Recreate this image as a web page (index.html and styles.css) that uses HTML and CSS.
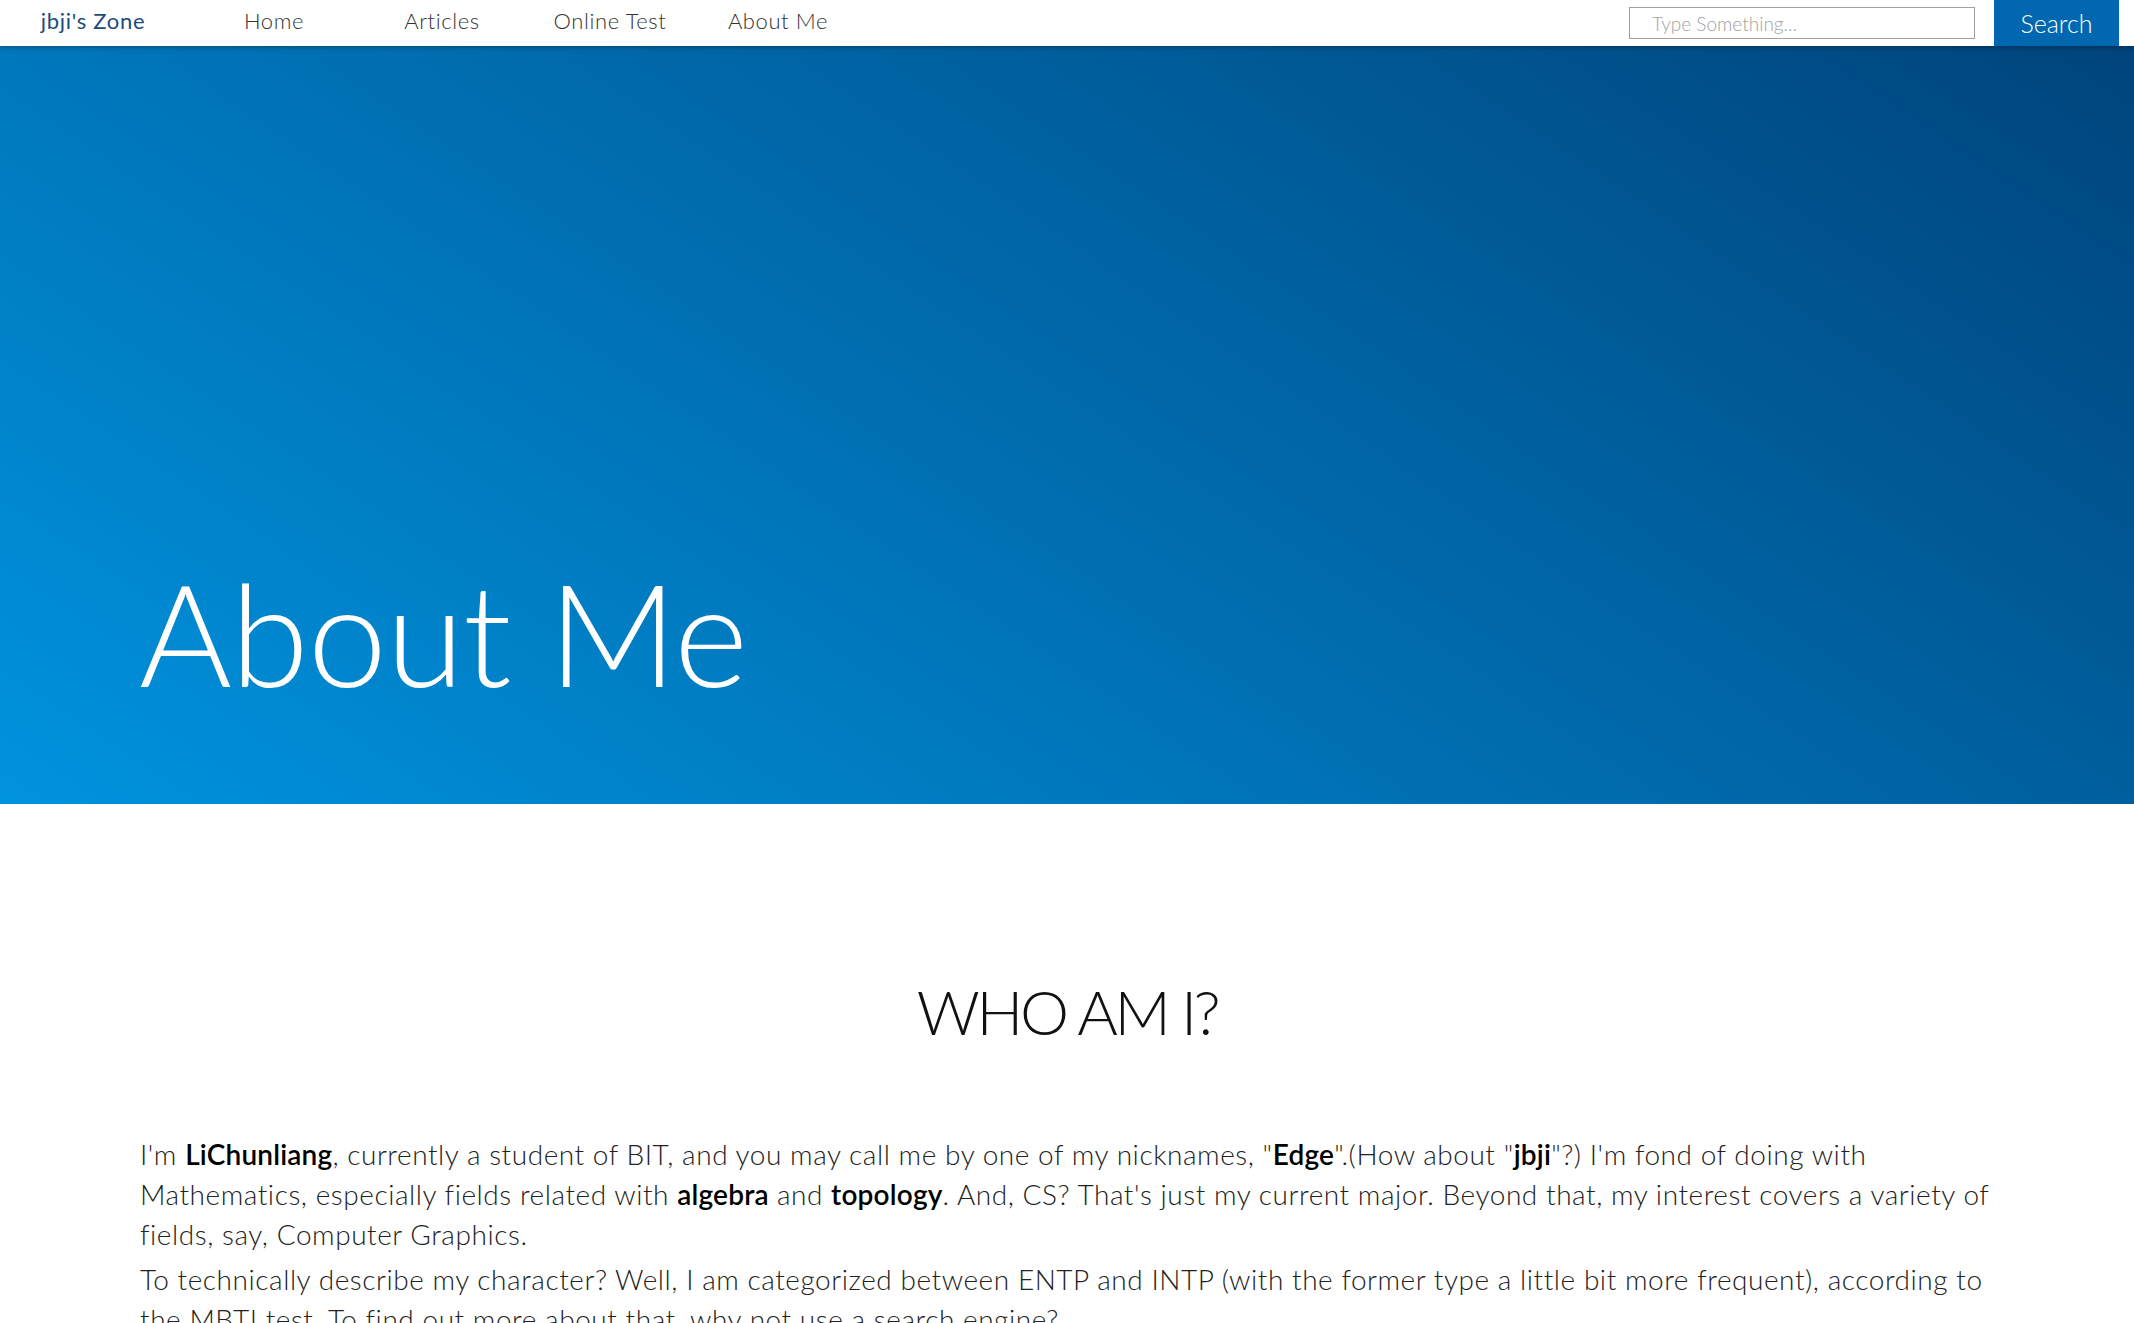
FILE: index.html
```html
<!DOCTYPE html>
<html lang="en">
<head>
<meta charset="utf-8">
<title>About Me - jbji's Zone</title>
<link rel="stylesheet" href="styles.css">
</head>
<body>
<header class="topbar">
  <a class="brand" href="#">jbji's Zone</a>
  <nav class="menu">
    <a class="menu-item" href="#">Home</a>
    <a class="menu-item" href="#">Articles</a>
    <a class="menu-item" href="#">Online Test</a>
    <a class="menu-item" href="#">About Me</a>
  </nav>
  <form class="search">
    <input class="search-input" type="text" placeholder="Type Something...">
    <button class="search-btn" type="button">Search</button>
  </form>
</header>
<section class="hero">
  <h1 class="hero-title">About Me</h1>
</section>
<main class="content">
  <h2 class="section-title">WHO AM I?</h2>
  <p class="text">I'm <b>LiChunliang</b>, currently a student of BIT, and you may call me by one of my nicknames, "<b>Edge</b>".(How about "<b>jbji</b>"?) I'm fond of doing with Mathematics, especially fields related with <b>algebra</b> and <b>topology</b>. And, CS? That's just my current major. Beyond that, my interest covers a variety of fields, say, Computer Graphics.</p>
  <p class="text">To technically describe my character? Well, I am categorized between ENTP and INTP (with the former type a little bit more frequent), according to the MBTI test. To find out more about that, why not use a search engine?</p>
</main>
</body>
</html>
```
FILE: styles.css
```css
html, body {
  margin: 0;
  padding: 0;
  background: #ffffff;
}
body {
  font-family: "Lato", "Open Sans", "Liberation Sans", sans-serif;
  font-weight: 300;
  color: #1a1a1a;
  overflow-x: hidden;
}
a { text-decoration: none; }

.topbar {
  position: relative;
  z-index: 2;
  display: flex;
  align-items: center;
  height: 46px;
  background: #ffffff;
  box-shadow: 0 2px 4px rgba(0, 0, 0, 0.25);
  padding-right: 15px;
}
.brand {
  width: 186px;
  text-align: center;
  font-size: 22px;
  font-weight: 400;
  letter-spacing: 0.7px;
  color: #1d4c7c;
  padding-bottom: 5px;
}
.menu {
  display: flex;
  padding-bottom: 5px;
  margin-left: 4px;
}
.menu-item {
  width: 168px;
  text-align: center;
  font-size: 22px;
  font-weight: 300;
  letter-spacing: 0.6px;
  color: #333333;
}
.search {
  margin-left: auto;
  display: flex;
  align-items: center;
  gap: 19px;
  height: 100%;
}
.search-input {
  box-sizing: border-box;
  width: 346px;
  height: 32px;
  border: 1px solid #a0a0a0;
  padding: 0 22px;
  font-family: inherit;
  font-weight: 300;
  font-size: 19px;
  color: #333;
  outline: none;
}
.search-input::placeholder {
  color: #a0a0a0;
}
.search-btn {
  width: 125px;
  height: 46px;
  border: none;
  background: #0067b0;
  color: #ffffff;
  font-family: inherit;
  font-weight: 300;
  font-size: 25px;
  padding: 0;
}

.hero {
  height: 758px;
  box-sizing: border-box;
  display: flex;
  align-items: flex-end;
  padding: 0 0 87px 139px;
  background: linear-gradient(34deg, #0093de 0%, #006bad 50%, #00447c 100%);
}
.hero-title {
  margin: 0;
  font-size: 142px;
  font-weight: 300;
  line-height: 1.2;
  color: #ffffff;
  letter-spacing: -1px;
}

.content {
  padding: 170px 140px 40px;
}
.section-title {
  margin: 0 0 86px;
  text-align: center;
  font-size: 62px;
  font-weight: 300;
  line-height: 1.2;
  letter-spacing: -3.3px;
  color: #111;
}
.text {
  margin: 0 0 5px;
  font-size: 28px;
  line-height: 40px;
  letter-spacing: 0.55px;
  color: #222;
}
.text b {
  font-weight: 600;
  letter-spacing: 0.2px;
  color: #000;
}
```
